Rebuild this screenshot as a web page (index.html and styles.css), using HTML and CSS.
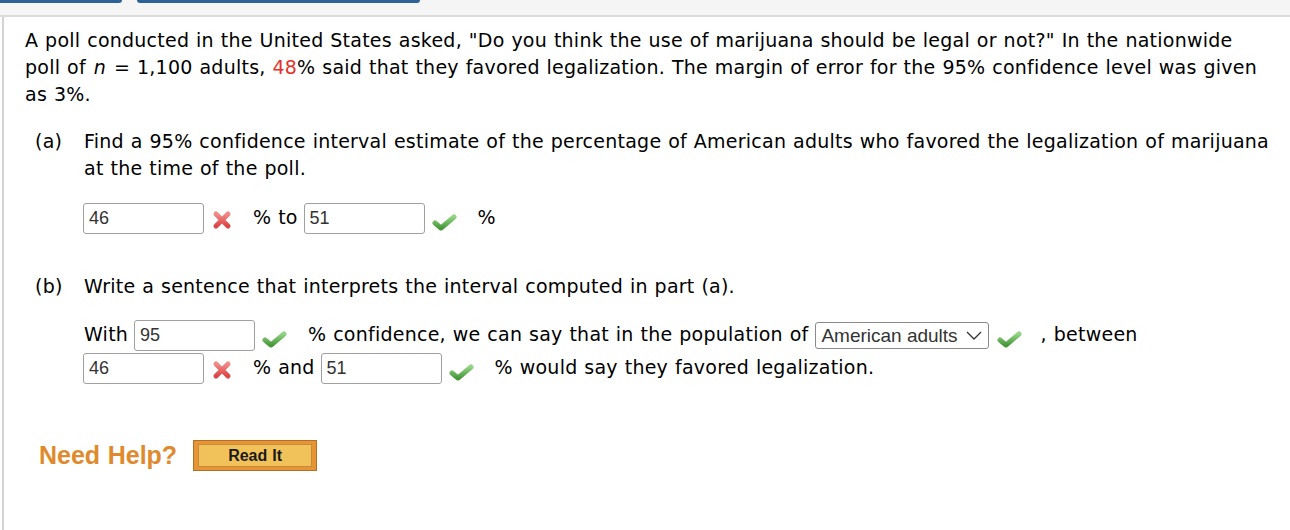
FILE: index.html
```html
<!DOCTYPE html>
<html>
<head>
<meta charset="utf-8">
<link rel="stylesheet" href="styles.css">
</head>
<body>
<div class="topbar">
  <div class="tab tab1"></div>
  <div class="tab tab2"></div>
</div>
<div class="panel">
  <p class="intro">A poll conducted in the United States asked, "Do you think the use of marijuana should be legal or not?" In the nationwide poll of <i class="var">n</i> = 1,100 adults, <span class="red">48</span>% said that they favored legalization. The margin of error for the 95% confidence level was given as 3%.</p>

  <div class="part part-a">
    <div class="label">(a)</div>
    <div class="body">
      <p class="q">Find a 95% confidence interval estimate of the percentage of American adults who favored the legalization of marijuana at the time of the poll.</p>
      <div class="answers">
        <span class="box">46</span><span class="icon wrong"><svg viewBox="0 0 25 22" width="25" height="22"><defs><linearGradient id="rg" x1="0" y1="0" x2="0" y2="1"><stop offset="0" stop-color="#f28a8a"/><stop offset="1" stop-color="#dc4646"/></linearGradient></defs><path d="M5 4 L17 16 M17 4 L5 16" stroke="url(#rg)" stroke-width="5" stroke-linecap="round"/></svg></span>% to <span class="box">51</span><span class="icon right"><svg viewBox="0 0 25 22" width="25" height="22"><defs><linearGradient id="gg" x1="0" y1="0" x2="0" y2="1"><stop offset="0" stop-color="#92d483"/><stop offset="1" stop-color="#48983b"/></linearGradient></defs><path d="M3 13 L9 18 L22 7" fill="none" stroke="url(#gg)" stroke-width="5" stroke-linecap="round" stroke-linejoin="round"/></svg></span>%
      </div>
    </div>
  </div>

  <div class="part part-b">
    <div class="label">(b)</div>
    <div class="body">
      <p class="q">Write a sentence that interprets the interval computed in part (a).</p>
      <div class="answers two">
        With <span class="box">95</span><span class="icon right"><svg viewBox="0 0 25 22" width="25" height="22"><path d="M3 13 L9 18 L22 7" fill="none" stroke="url(#gg)" stroke-width="5" stroke-linecap="round" stroke-linejoin="round"/></svg></span>% confidence, we can say that in the population of <span class="select">American adults<svg class="caret" viewBox="0 0 16 10" width="16" height="10"><path d="M1 1 L8 8 L15 1" fill="none" stroke="#333" stroke-width="1.3"/></svg></span><span class="icon right sel"><svg viewBox="0 0 25 22" width="25" height="22"><path d="M3 13 L9 18 L22 7" fill="none" stroke="url(#gg)" stroke-width="5" stroke-linecap="round" stroke-linejoin="round"/></svg></span>, between<br><span class="box">46</span><span class="icon wrong"><svg viewBox="0 0 25 22" width="25" height="22"><path d="M5 4 L17 16 M17 4 L5 16" stroke="url(#rg)" stroke-width="5" stroke-linecap="round"/></svg></span>% and <span class="box">51</span><span class="icon right"><svg viewBox="0 0 25 22" width="25" height="22"><path d="M3 13 L9 18 L22 7" fill="none" stroke="url(#gg)" stroke-width="5" stroke-linecap="round" stroke-linejoin="round"/></svg></span>% would say they favored legalization.
      </div>
    </div>
  </div>

  <div class="help">
    <span class="need">Need Help?</span>
    <span class="readit"><span class="inner">Read It</span></span>
  </div>
</div>
</body>
</html>
```

FILE: styles.css
```css
html, body {
  margin: 0;
  padding: 0;
  background: #fff;
}
body {
  font-family: "DejaVu Sans", Verdana, sans-serif;
  font-size: 19px;
  letter-spacing: 0.24px;
  word-spacing: 0.6px;
  color: #000;
  width: 1290px;
  height: 530px;
  overflow: hidden;
}
.topbar {
  height: 15px;
  background: #f5f5f5;
  border-bottom: 2px solid #dcdcdc;
  display: flex;
  gap: 15px;
}
.tab {
  height: 3px;
  background: #2c6295;
  border-radius: 0 0 6px 6px;
}
.tab1 { width: 122px; border-radius: 0 0 6px 0; }
.tab2 { width: 283px; }
.panel {
  margin-left: 2px;
  border-left: 2px solid #d4d4d4;
  padding: 10px 19px 0 21px;
  height: 520px;
}
p { margin: 0; }
.intro {
  line-height: 27px;
}
.var { padding: 0 1px; }
.red { color: #e8312a; }
.part {
  display: grid;
  grid-template-columns: 59px 1fr;
  line-height: 27px;
}
.part-a { margin-top: 20px; }
.part-b { margin-top: 39px; }
.label { padding-left: 10px; }
.answers {
  margin-top: 19px;
  line-height: 32px;
}
.part-b .answers { margin-top: 18px; }
.box {
  display: inline-block;
  box-sizing: border-box;
  width: 121px;
  height: 31px;
  margin-left: -1px;
  border: 1px solid #a0a0a0;
  border-radius: 3px;
  font-family: "Liberation Sans", Arial, sans-serif;
  font-size: 18px;
  letter-spacing: 0;
  word-spacing: 0;
  color: #333;
  line-height: 28px;
  padding-left: 5px;
  vertical-align: middle;
}
.icon {
  display: inline-block;
  width: 25px;
  height: 22px;
  margin: 0 21px 0 7px;
  vertical-align: middle;
  position: relative;
  top: 2px;
}
.icon.wrong { margin-right: 17px; }
.icon.sel { margin-left: 8px; margin-right: 19px; }
.icon svg { display: block; }
.select {
  display: inline-flex;
  align-items: center;
  box-sizing: border-box;
  height: 27px;
  border: 1px solid #8a8a8a;
  border-radius: 3px;
  font-family: "Liberation Sans", Arial, sans-serif;
  font-size: 19px;
  letter-spacing: 0;
  word-spacing: 0;
  color: #333;
  padding: 0 6px 0 5px;
  vertical-align: middle;
  gap: 8px;
}
.help {
  margin-top: 56px;
  padding-left: 14px;
  display: flex;
  align-items: center;
  gap: 16px;
}
.need {
  font-family: "Liberation Sans", Arial, sans-serif;
  font-weight: bold;
  font-size: 25px;
  letter-spacing: 0;
  color: #e08a2e;
}
.readit {
  box-sizing: border-box;
  width: 124px;
  height: 31px;
  background: #e79435;
  border: 1px solid #b07028;
  padding: 3px 4px;
  display: flex;
}
.inner {
  flex: 1;
  background: #f2c25a;
  border: 1px solid #c78a3c;
  font-family: "Liberation Sans", Arial, sans-serif;
  font-weight: bold;
  font-size: 16px;
  letter-spacing: 0;
  color: #1a1a1a;
  display: flex;
  align-items: center;
  justify-content: center;
}
```
